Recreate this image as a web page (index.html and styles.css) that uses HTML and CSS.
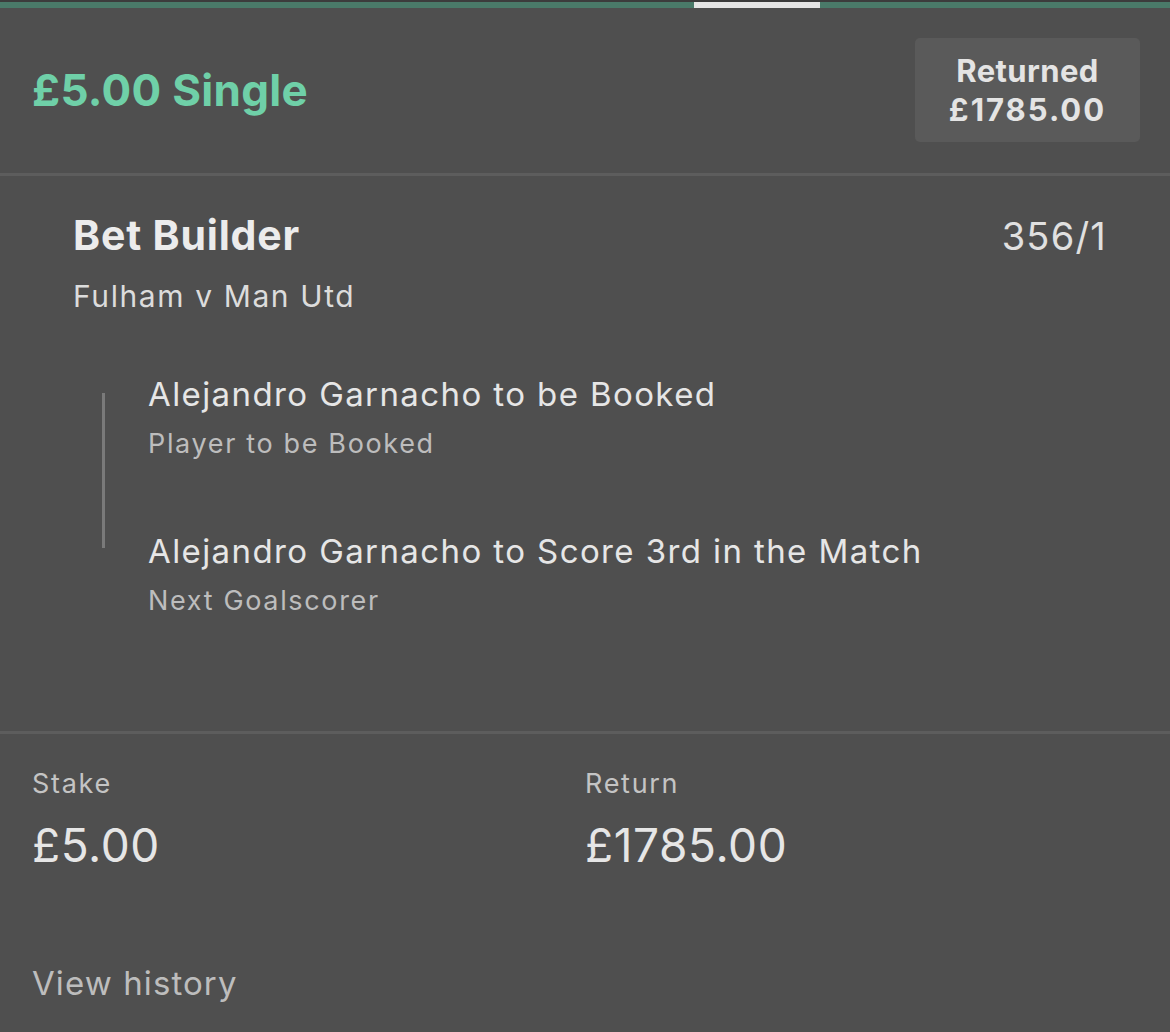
FILE: index.html
```html
<!DOCTYPE html>
<html lang="en">
<head>
    <meta charset="UTF-8">
    <meta name="viewport" content="width=device-width, initial-scale=1.0">
    <title>Bet Receipt</title>
    <link rel="stylesheet" href="styles.css">
</head>
<body>

<!-- Tab indicator -->
<div class="tabs">
    <span class="tab-active"></span>
</div>

<div class="bet">
    <!-- Header -->
    <div class="bet-header">
        <h1 class="bet-title">£5.00 Single</h1>
        <div class="returned">
            <span class="returned-label">Returned</span>
            <span class="returned-amount">£1785.00</span>
        </div>
    </div>

    <!-- Selection -->
    <div class="selection">
        <div class="selection-top">
            <h2>Bet Builder</h2>
            <span class="odds">356/1</span>
        </div>
        <div class="event">Fulham v Man Utd</div>

        <div class="legs">
            <div class="leg">
                <div class="leg-name">Alejandro Garnacho to be Booked</div>
                <div class="leg-market">Player to be Booked</div>
            </div>
            <div class="leg">
                <div class="leg-name">Alejandro Garnacho to Score 3rd in the Match</div>
                <div class="leg-market">Next Goalscorer</div>
            </div>
        </div>
    </div>

    <!-- Totals -->
    <div class="totals">
        <div class="total">
            <div class="total-label">Stake</div>
            <div class="total-value">£5.00</div>
        </div>
        <div class="total">
            <div class="total-label">Return</div>
            <div class="total-value">£1785.00</div>
        </div>
    </div>

    <div class="history">View history</div>
</div>

</body>
</html>
```

FILE: styles.css
```css
body {
    margin: 0;
    background-color: #4f4f4f;
    font-family: Inter, "Open Sans", sans-serif;
    color: #e6e6e6;
}
.tabs {
    position: relative;
    height: 6px;
    border-top: 2px solid #3c3c3c;
    background-color: #4a7a69;
}
.tab-active {
    position: absolute;
    left: 694px;
    top: 0;
    width: 126px;
    height: 6px;
    background-color: #e6e6e6;
}

/* Header */
.bet-header {
    display: flex;
    justify-content: space-between;
    align-items: center;
    padding: 30px 30px 31px 32px;
    border-bottom: 3px solid #5d5d5d;
}
.bet-title {
    margin: 0;
    font-size: 44px;
    font-weight: 700;
    color: #6fd0a8;
    letter-spacing: 0.3px;
}
.returned {
    width: 225px;
    height: 104px;
    background-color: #5a5a5a;
    border-radius: 5px;
    display: flex;
    flex-direction: column;
    align-items: center;
    justify-content: center;
    font-size: 31px;
    font-weight: 700;
    line-height: 39px;
    color: #e4e4e4;
}
.returned-label {
    letter-spacing: 0.4px;
}
.returned-amount {
    letter-spacing: 2px;
}

/* Selection */
.selection {
    padding: 34px 63px 114px 73px;
    border-bottom: 3px solid #5d5d5d;
}
.selection-top {
    display: flex;
    justify-content: space-between;
    align-items: baseline;
}
.selection-top h2 {
    margin: 0;
    font-size: 41px;
    font-weight: 700;
    line-height: 50px;
    letter-spacing: 0.8px;
    color: #ececec;
}
.odds {
    font-size: 38px;
    letter-spacing: 1.2px;
    color: #e0e0e0;
}
.event {
    margin-top: 18px;
    font-size: 30px;
    line-height: 36px;
    letter-spacing: 1.6px;
    color: #dcdcdc;
}
.legs {
    position: relative;
    margin-top: 60px;
    padding-left: 75px;
    display: flex;
    flex-direction: column;
    gap: 71px;
}
.legs::before {
    content: "";
    position: absolute;
    left: 29px;
    top: 19px;
    width: 3px;
    height: 155px;
    background-color: #7a7a7a;
}
.leg-name {
    font-size: 33px;
    line-height: 40px;
    letter-spacing: 1.4px;
    color: #e6e6e6;
}
.leg-market {
    margin-top: 14px;
    font-size: 27px;
    line-height: 32px;
    letter-spacing: 1.65px;
    color: #bdbdbd;
}

/* Totals */
.totals {
    display: grid;
    grid-template-columns: 553px 1fr;
    padding: 34px 32px 0;
}
.total-label {
    font-size: 27px;
    line-height: 32px;
    letter-spacing: 1.7px;
    color: #c4c4c4;
}
.total-value {
    margin-top: 17px;
    font-size: 46px;
    line-height: 56px;
    letter-spacing: 0.6px;
    color: #e6e6e6;
}
.history {
    padding: 90px 32px 0;
    font-size: 33px;
    line-height: 40px;
    letter-spacing: 1.1px;
    color: #bdbdbd;
}
```
